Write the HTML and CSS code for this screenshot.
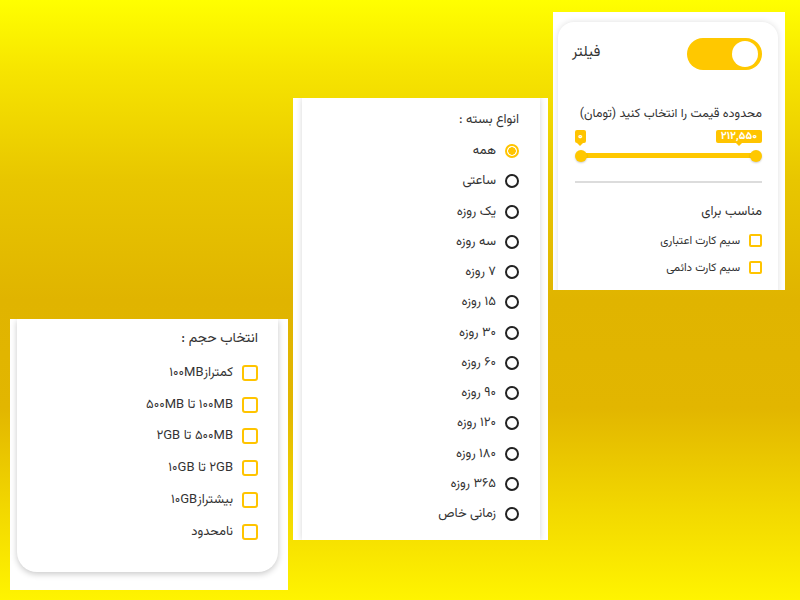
FILE: index.html
```html
<!DOCTYPE html>
<html lang="fa">
<head>
<meta charset="utf-8">
<title>فیلتر</title>
<link rel="stylesheet" href="styles.css">
</head>
<body>
<div class="canvas">

  <section class="shot shot-filter">
    <div class="card card-filter" dir="rtl">
      <div class="filter-head">
        <span class="toggle"><span class="knob"></span></span>
        <span class="filter-title">فیلتر</span>
      </div>
      <div class="price-label">محدوده قیمت را انتخاب کنید (تومان)</div>
      <div class="slider">
        <div class="badges">
          <span class="badge badge-max">۲۱۲,۵۵۰</span>
          <span class="badge">۰</span>
        </div>
        <div class="track">
          <span class="thumb"></span>
          <span class="thumb"></span>
        </div>
      </div>
      <hr class="divider">
      <div class="group-title">مناسب برای</div>
      <ul class="checks checks-small">
        <li><span class="box"></span>سیم کارت اعتباری</li>
        <li><span class="box"></span>سیم کارت دائمی</li>
      </ul>
    </div>
  </section>

  <section class="shot shot-types">
    <div class="card card-types" dir="rtl">
      <div class="list-title">انواع بسته :</div>
      <ul class="radios">
        <li class="on"><span class="radio"></span>همه</li>
        <li><span class="radio"></span>ساعتی</li>
        <li><span class="radio"></span>یک روزه</li>
        <li><span class="radio"></span>سه روزه</li>
        <li><span class="radio"></span>۷ روزه</li>
        <li><span class="radio"></span>۱۵ روزه</li>
        <li><span class="radio"></span>۳۰ روزه</li>
        <li><span class="radio"></span>۶۰ روزه</li>
        <li><span class="radio"></span>۹۰ روزه</li>
        <li><span class="radio"></span>۱۲۰ روزه</li>
        <li><span class="radio"></span>۱۸۰ روزه</li>
        <li><span class="radio"></span>۳۶۵ روزه</li>
        <li><span class="radio"></span>زمانی خاص</li>
      </ul>
    </div>
  </section>

  <section class="shot shot-size">
    <div class="card card-size" dir="rtl">
      <div class="list-title size-title">انتخاب حجم :</div>
      <ul class="checks checks-big">
        <li><span class="box"></span>کمتراز۱۰۰MB</li>
        <li><span class="box"></span>۱۰۰MB تا ۵۰۰MB</li>
        <li><span class="box"></span>۵۰۰MB تا ۲GB</li>
        <li><span class="box"></span>۲GB تا ۱۰GB</li>
        <li><span class="box"></span>بیشتراز۱۰GB</li>
        <li><span class="box"></span>نامحدود</li>
      </ul>
    </div>
  </section>

</div>
</body>
</html>
```

FILE: styles.css
```css
* { box-sizing: border-box; }

html, body {
  margin: 0;
  padding: 0;
}

body {
  width: 800px;
  height: 600px;
  overflow: hidden;
  font-family: "Vazirmatn", "Noto Sans Arabic", "DejaVu Sans", sans-serif;
  color: #333;
}

.canvas {
  position: relative;
  width: 800px;
  height: 600px;
  background: linear-gradient(to bottom,
    #ffff00 0%,
    #f6e400 12%,
    #e8c600 30%,
    #e0b400 50%,
    #e2b600 68%,
    #f2d800 85%,
    #fff400 100%);
}

ul { list-style: none; margin: 0; padding: 0; }

/* screenshot panels placed on the canvas */
.shot {
  position: absolute;
  background: #fff;
  overflow: hidden;
}

.shot-filter { left: 553px; top: 12px; width: 232px; height: 278px; }
.shot-types  { left: 293px; top: 98px; width: 255px; height: 442px; }
.shot-size   { left: 10px;  top: 319px; width: 278px; height: 271px; }

.card {
  background: #fff;
}

/* ---------- filter card ---------- */
.card-filter {
  margin: 10px 7px 0 5px;
  height: 300px;
  border-radius: 16px 16px 0 0;
  box-shadow: 0 0 6px rgba(0, 0, 0, 0.13);
  padding: 16px 16px 0 14px;
}

.filter-head {
  display: flex;
  justify-content: space-between;
  align-items: center;
  height: 32px;
}

.filter-title {
  font-size: 15px;
  margin-top: -3px;
}

.toggle {
  direction: ltr;
  display: flex;
  justify-content: flex-end;
  align-items: center;
  width: 75px;
  height: 32px;
  border-radius: 16px;
  background: #ffc800;
  padding: 0 4px;
}

.knob {
  width: 26px;
  height: 26px;
  border-radius: 50%;
  background: #fff;
}

.price-label {
  margin-top: 35px;
  font-size: 12.5px;
  line-height: 18px;
  color: #333;
}

.slider {
  margin: 7px 0 0 3px;
}

.badges {
  display: flex;
  justify-content: space-between;
  height: 13px;
}

.badge {
  position: relative;
  background: #ffc400;
  color: #fff;
  font-size: 11px;
  font-weight: bold;
  line-height: 13px;
  padding: 0 3px;
  border-radius: 2px;
}
.badge-max { padding: 0 5px; }
.badge::after {
  content: "";
  position: absolute;
  left: 50%;
  bottom: -3px;
  margin-left: -3px;
  border-left: 3px solid transparent;
  border-right: 3px solid transparent;
  border-top: 3px solid #ffc400;
}

.track {
  margin: 10px 6px 0 6px;
  height: 5px;
  background: #ffc800;
  display: flex;
  justify-content: space-between;
  align-items: center;
}

.thumb {
  width: 12px;
  height: 12px;
  border-radius: 50%;
  background: #ffc800;
  box-shadow: 0 1px 2px rgba(0, 0, 0, 0.2);
  margin: 0 -6px;
}

.divider {
  border: 0;
  height: 2px;
  background: #dcdcdc;
  margin: 23px 0 0 3px;
}

.group-title {
  margin-top: 20px;
  font-size: 13px;
  line-height: 18px;
}

.checks li {
  display: flex;
  align-items: center;
}

.checks-small { margin-top: 6px; }
.checks-small li {
  height: 27px;
  font-size: 11.5px;
  gap: 9px;
}
.checks-small .box {
  width: 13px;
  height: 13px;
  border: 2px solid #ffc400;
  border-radius: 2px;
  flex: none;
}

/* ---------- package types card ---------- */
.card-types {
  margin: 0 8px 0 9px;
  height: 442px;
  box-shadow: 0 0 6px rgba(0, 0, 0, 0.16);
  padding: 12px 21px 0 0;
}

.list-title {
  font-size: 13px;
  line-height: 20px;
}

.radios { margin-top: 6px; }

.radios li {
  display: flex;
  align-items: center;
  gap: 9px;
  height: 30.25px;
  font-size: 13px;
}

.radio {
  width: 14px;
  height: 14px;
  border-radius: 50%;
  border: 2px solid #222;
  flex: none;
}

.radios li.on .radio {
  border-color: #ffc400;
  background: radial-gradient(circle, #ffc400 0 3.5px, #fff 4px);
}

/* ---------- size card ---------- */
.card-size {
  margin: 0 10px 0 7px;
  height: 253px;
  border-radius: 0 0 20px 20px;
  box-shadow: 0 2px 6px rgba(0, 0, 0, 0.22);
  padding: 10px 20px 0 0;
}

.size-title { font-size: 14px; }

.checks-big { margin-top: 8px; }
.checks-big li {
  height: 31.8px;
  font-size: 13px;
  gap: 9px;
}
.checks-big .box {
  width: 16px;
  height: 16px;
  border: 2px solid #ffc400;
  border-radius: 3px;
  flex: none;
}
```
